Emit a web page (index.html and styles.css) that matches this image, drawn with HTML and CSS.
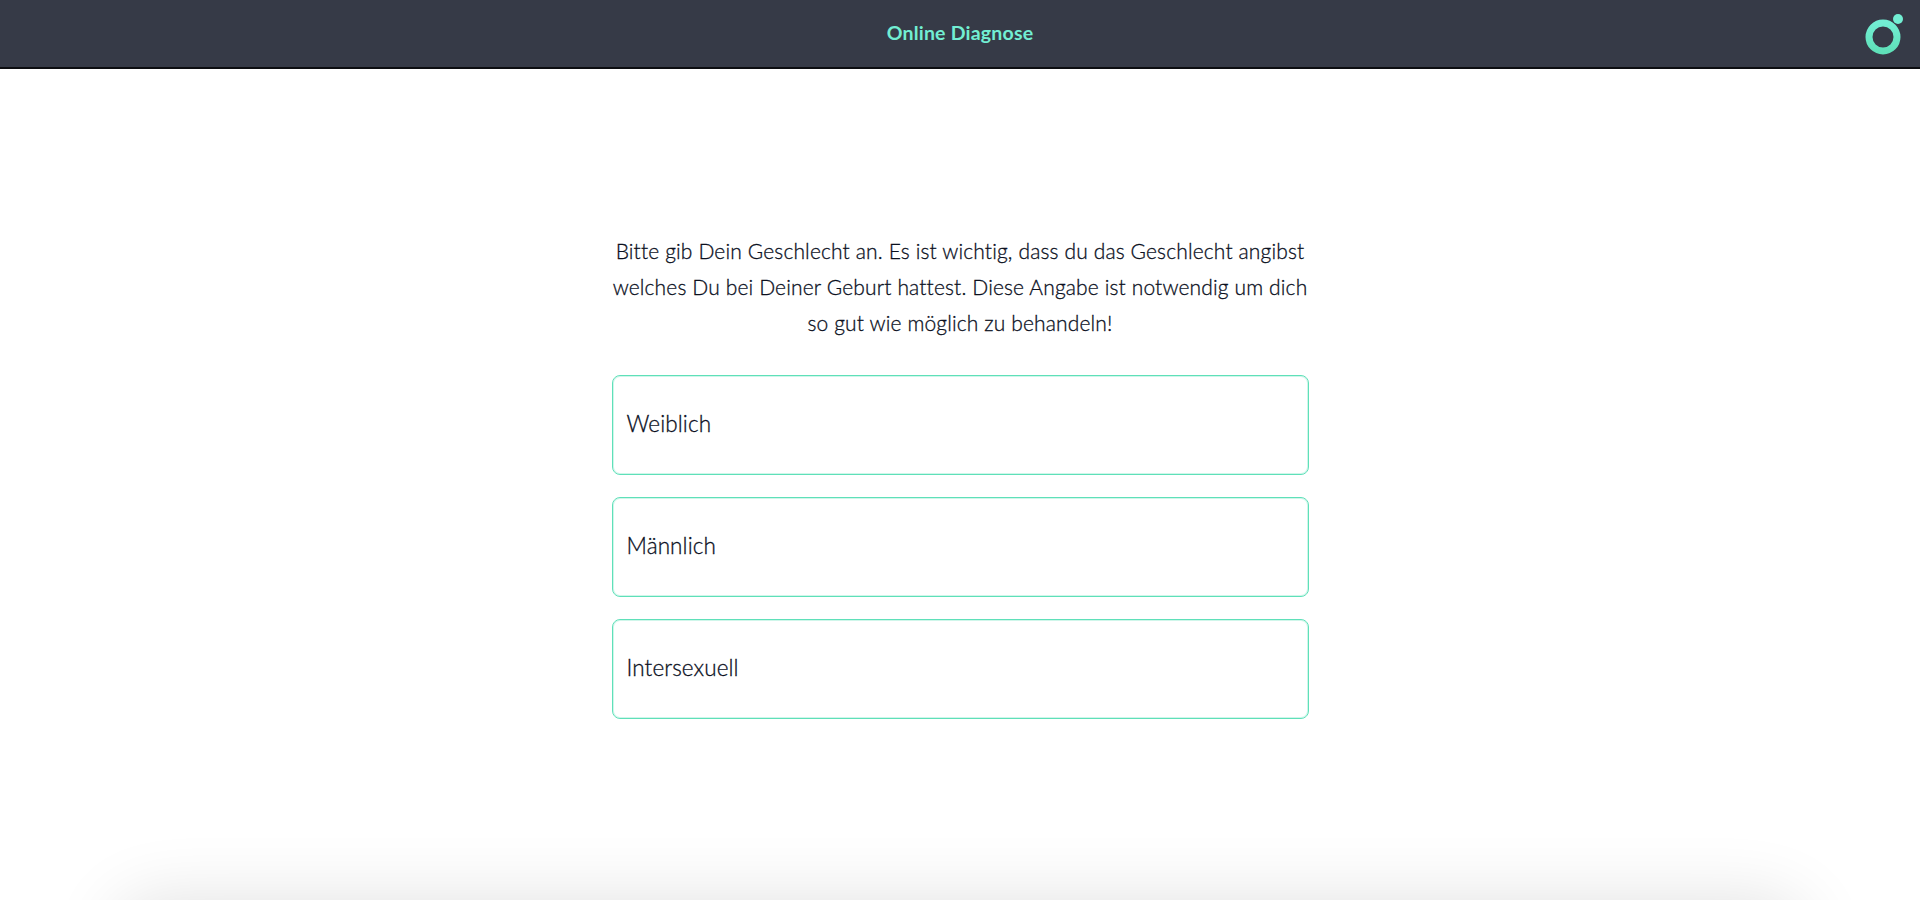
FILE: index.html
```html
<!DOCTYPE html>
<html lang="de">
<head>
<meta charset="utf-8">
<title>Online Diagnose</title>
<link rel="stylesheet" href="styles.css">
</head>
<body>
<header class="topbar">
  <span class="topbar-side"></span>
  <h1 class="topbar-title">Online Diagnose</h1>
  <span class="topbar-side topbar-logo">
    <svg class="logo" width="40" height="44" viewBox="0 0 40 44" aria-hidden="true">
      <defs>
        <linearGradient id="ring" x1="0" y1="0" x2="0" y2="1">
          <stop offset="0" stop-color="#72eed3"/>
          <stop offset="1" stop-color="#5fe0b9"/>
        </linearGradient>
      </defs>
      <circle cx="18" cy="25" r="14" fill="none" stroke="url(#ring)" stroke-width="7"/>
      <circle cx="33" cy="7" r="5" fill="#72eed3"/>
    </svg>
  </span>
</header>
<main class="content">
  <p class="question">Bitte gib Dein Geschlecht an. Es ist wichtig, dass du das Geschlecht angibst welches Du bei Deiner Geburt hattest. Diese Angabe ist notwendig um dich so gut wie möglich zu behandeln!</p>
  <div class="options">
    <button class="option" type="button">Weiblich</button>
    <button class="option" type="button">Männlich</button>
    <button class="option" type="button">Intersexuell</button>
  </div>
</main>
<footer class="sheet"></footer>
</body>
</html>
```
FILE: styles.css
```css
html, body {
  margin: 0;
  height: 900px;
  overflow: hidden;
  background: #fff;
}
body {
  font-family: "Lato", "Noto Sans", sans-serif;
  color: #0b101e;
}
.topbar {
  display: grid;
  grid-template-columns: 1fr auto 1fr;
  align-items: center;
  height: 67px;
  background: #363a47;
  border-bottom: 2px solid #0c0d11;
  box-sizing: content-box;
}
.topbar-title {
  margin: 0 0 2px;
  font-size: 19.5px;
  font-weight: 700;
  color: #72eed3;
  letter-spacing: 0.2px;
}
.topbar-logo {
  display: flex;
  justify-content: flex-end;
  padding-right: 15px;
}
.logo {
  display: block;
}
.content {
  width: 697px;
  height: 831px;
  margin: 0 auto;
  padding-top: 164px;
  box-sizing: border-box;
}
.question {
  margin: 0 0 34px;
  font-size: 21px;
  font-weight: 300;
  letter-spacing: 0.14px;
  line-height: 36px;
  text-align: center;
  -webkit-text-stroke: 0.3px #0b101e;
}
.options {
  display: flex;
  flex-direction: column;
  gap: 22px;
}
.option {
  display: block;
  width: 100%;
  height: 100px;
  padding: 0 14px 4px;
  background: #fff;
  border: 1px solid #5fe0b9;
  border-radius: 8px;
  box-shadow: inset 0 0 0 1px rgba(95, 224, 185, 0.3);
  font-family: inherit;
  font-size: 22.5px;
  font-weight: 300;
  letter-spacing: 0.1px;
  color: inherit;
  text-align: left;
  -webkit-text-stroke: 0.3px #0b101e;
}
.sheet {
  width: 1690px;
  height: 200px;
  margin: 0 auto;
  background: #fff;
  border-radius: 40px;
  box-shadow: 0 0 70px rgba(0, 0, 0, 0.12);
}
```
